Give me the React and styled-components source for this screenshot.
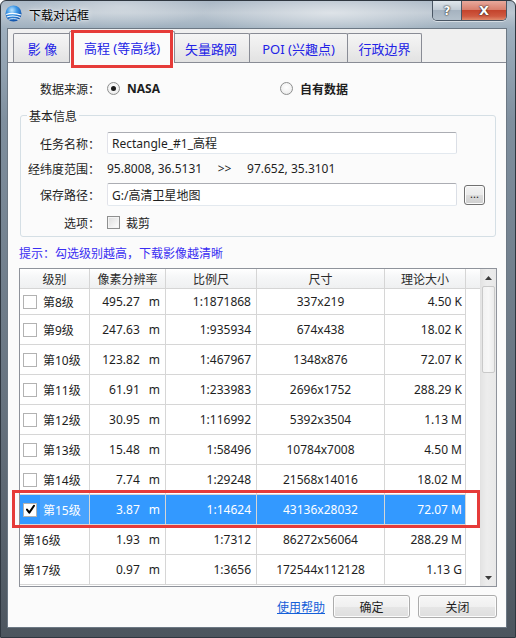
import React from 'react';
import styled, { createGlobalStyle } from 'styled-components';

const Global = createGlobalStyle`
  html, body { margin: 0; padding: 0; background: #ffffff; }
  body {
    font-family: "Noto Sans", "Noto Sans CJK SC", sans-serif;
    font-size: 12px;
    color: #1e1e1e;
  }
  * { box-sizing: border-box; }
`;

const Window = styled.div`
  position: relative;
  width: 516px;
  height: 638px;
  display: flex;
  flex-direction: column;
  border: 1px solid #2f3740;
  border-radius: 6px 6px 0 0;
  padding: 0 8px 9px 6px;
  background:
    radial-gradient(ellipse 130px 26px at 330px 12px, rgba(255, 255, 255, 0.5), rgba(255, 255, 255, 0)),
    radial-gradient(ellipse 90px 22px at 120px 6px, rgba(255, 255, 255, 0.35), rgba(255, 255, 255, 0)),
    linear-gradient(180deg, #aab8c6 0px, #bcc7d1 12px, #9fb0bf 27px, #7f8f9e 120px, #67737f 400px, #4c555e 638px);
`;

const TitleBar = styled.div`
  height: 27px;
  display: flex;
  align-items: flex-start;
  flex-shrink: 0;
`;

const AppIcon = styled.svg`
  width: 17px;
  height: 17px;
  margin: 4px 0 0 -2px;
  flex-shrink: 0;
`;

const TitleText = styled.div`
  margin-left: 7px;
  line-height: 27px;
  font-family: "Noto Sans CJK SC", sans-serif;
  font-size: 12px;
  color: #000;
  text-shadow: 0 0 6px rgba(255, 255, 255, 0.9), 0 0 2px rgba(255, 255, 255, 0.8);
`;

const CaptionButtons = styled.div`
  margin-left: auto;
  display: flex;
  border: 1px solid #4a5664;
  border-top: none;
  border-radius: 0 0 5px 5px;
  overflow: hidden;
  box-shadow: 0 1px 0 rgba(255, 255, 255, 0.5);
`;

const CaptionButton = styled.div`
  width: ${(p) => p.$w}px;
  height: 19px;
  display: flex;
  align-items: center;
  justify-content: center;
  color: #fff;
  font-family: "DejaVu Sans", sans-serif;
  font-weight: bold;
  font-size: ${(p) => (p.$close ? 13 : 12)}px;
  text-shadow: 0 0 2px #222, 0 0 1px #222;
  background: ${(p) =>
    p.$close
      ? 'linear-gradient(180deg, #e8a99c 0%, #d9806e 45%, #c4442d 50%, #cf5a41 80%, #e08a6c 100%)'
      : 'linear-gradient(180deg, #dfe6ec 0%, #c2ccd6 45%, #a6b3c0 50%, #b4c0cb 100%)'};
  border-left: ${(p) => (p.$close ? '1px solid #4a5664' : 'none')};
`;

const Client = styled.div`
  flex: 1;
  display: flex;
  flex-direction: column;
  background: #f0f0f0;
  border: 1px solid #6c7884;
`;

const TabStrip = styled.div`
  height: 33px;
  display: flex;
  align-items: flex-end;
  padding-left: 5px;
  flex-shrink: 0;
`;

const Tab = styled.div`
  width: ${(p) => (p.$active ? p.$w + 4 : p.$w)}px;
  height: ${(p) => (p.$active ? 32 : 29)}px;
  margin: ${(p) => (p.$active ? '0 -2px -1px -2px' : '0')};
  margin-left: ${(p) => (p.$first ? 0 : p.$active ? -3 : -1)}px;
  display: flex;
  align-items: center;
  justify-content: center;
  border: 1px solid #898c95;
  border-bottom: none;
  border-radius: 2px 2px 0 0;
  background: ${(p) => (p.$active ? '#fbfbfb' : 'linear-gradient(180deg, #f5f5f5 0%, #ececec 50%, #e2e2e2 100%)')};
  position: relative;
  z-index: ${(p) => (p.$active ? 1 : 0)};
  color: #2222e6;
  font-size: 13px;
  white-space: pre;
  padding-top: ${(p) => (p.$active ? 0 : 1)}px;
`;

const Panel = styled.div`
  flex: 1;
  display: flex;
  flex-direction: column;
  background: #fbfbfb;
  border-top: 1px solid #898c95;
  padding: 0 10px 0 11px;
`;

const SourceRow = styled.div`
  margin-top: 12px;
  height: 26px;
  display: flex;
  align-items: center;
`;

const Label = styled.div`
  width: ${(p) => p.$w}px;
  text-align: right;
  flex-shrink: 0;
  margin-right: 7px;
  font-family: "Noto Sans CJK SC", sans-serif;
  color: #1e1e1e;
`;

const RadioOption = styled.div`
  width: ${(p) => p.$w}px;
  display: flex;
  align-items: center;
  gap: 7px;
  font-weight: bold;
`;

const Radio = styled.span`
  width: 13px;
  height: 13px;
  border-radius: 50%;
  border: 1px solid #8e8f8f;
  background: radial-gradient(circle at 50% 40%, #ffffff 0%, #f1f1f1 60%, #dcdcdc 100%);
  display: inline-flex;
  align-items: center;
  justify-content: center;
  &::after {
    content: '';
    width: 5px;
    height: 5px;
    border-radius: 50%;
    background: #1c1c1c;
    display: ${(p) => (p.$checked ? 'block' : 'none')};
  }
`;

const Group = styled.fieldset`
  margin: 6px 0 0 1px;
  padding: 8px 0 0 0;
  border: 1px solid #d5dfe5;
  border-radius: 3px;
  min-width: 0;
`;

const Legend = styled.legend`
  margin-left: 6px;
  padding: 0 2px;
  line-height: 17px;
  font-family: "Noto Sans CJK SC", sans-serif;
  color: #1e1e1e;
`;

const FieldRow = styled.div`
  height: ${(p) => p.$h}px;
  margin-top: ${(p) => p.$mt || 0}px;
  display: flex;
  align-items: center;
`;

const TextBox = styled.input`
  width: 350px;
  height: ${(p) => p.$h}px;
  border: 1px solid;
  border-color: #abadb3 #dbdfe6 #e3e9ef #e2e3ea;
  border-radius: 2px;
  background: #fff;
  padding: 0 4px;
  font-family: "Noto Sans", "Noto Sans CJK SC", sans-serif;
  font-size: 12px;
  color: #1e1e1e;
  outline: none;
`;

const Coord = styled.span`
  white-space: pre;
`;

const SmallButton = styled.div`
  width: 21px;
  height: 20px;
  margin-left: 7px;
  border: 1px solid #707070;
  border-radius: 3px;
  background: linear-gradient(180deg, #f2f2f2 0%, #ebebeb 50%, #dddddd 51%, #cfcfcf 100%);
  box-shadow: inset 0 0 0 1px #fbfbfb;
  display: flex;
  align-items: center;
  justify-content: center;
  font-size: 11px;
  line-height: 1;
  padding-bottom: 2px;
`;

const CheckOption = styled.div`
  display: flex;
  align-items: center;
  gap: 6px;
  font-family: "Noto Sans CJK SC", sans-serif;
`;

const CheckBox = styled.span`
  width: ${(p) => p.$size || 13}px;
  height: ${(p) => p.$size || 13}px;
  flex-shrink: 0;
  border: 1px solid ${(p) => p.$border || '#8e8f8f'};
  background: ${(p) => p.$bg || 'linear-gradient(135deg, #dcdcdc 0%, #f4f4f4 70%, #ffffff 100%)'};
  box-shadow: ${(p) => (p.$inset ? 'inset 0 0 0 1px #f4f4f4' : 'none')};
  display: inline-flex;
  align-items: center;
  justify-content: center;
`;

const Hint = styled.div`
  margin-top: 8px;
  line-height: 16px;
  color: #3a2ef2;
  font-family: "Noto Sans CJK SC", sans-serif;
`;

const ListView = styled.div`
  margin-top: 7px;
  width: 478px;
  height: 319px;
  border: 1px solid #8f939b;
  display: flex;
  background: #fff;
  flex-shrink: 0;
`;

const ListArea = styled.div`
  flex: 1;
  display: flex;
  flex-direction: column;
  overflow: hidden;
`;

const COLS = '70px 76px 91px 128px 81px';

const HeaderRow = styled.div`
  height: 20px;
  display: grid;
  grid-template-columns: ${COLS} 1fr;
  background: linear-gradient(180deg, #ffffff 0%, #f6f7f8 40%, #eff0f1 100%);
  border-bottom: 1px solid #d5d5d5;
  flex-shrink: 0;
`;

const HeadCell = styled.div`
  display: flex;
  align-items: center;
  justify-content: center;
  border-right: ${(p) => (p.$last ? 'none' : '1px solid #d5d5d5')};
  font-family: "Noto Sans CJK SC", sans-serif;
  color: #2a2a2a;
`;

const Row = styled.div`
  width: 446px;
  height: ${(p) => p.$h}px;
  display: grid;
  grid-template-columns: ${COLS};
  border-bottom: 1px solid #d6d6d6;
  flex-shrink: 0;
  color: ${(p) => (p.$sel ? '#ffffff' : '#1e1e1e')};
`;

const Cell = styled.div`
  display: flex;
  align-items: center;
  justify-content: ${(p) => p.$align || 'flex-end'};
  border-right: 1px solid #d6d6d6;
  padding: 0 ${(p) => p.$pr ?? 5}px 0 ${(p) => p.$pl ?? 0}px;
  background: ${(p) => (p.$sel ? p.$selBg || '#3399ff' : 'transparent')};
  white-space: pre;
`;

const LevelText = styled.span`
  margin-left: ${(p) => (p.$check ? 6 : 0)}px;
  font-family: "Noto Sans", "Noto Sans CJK SC", sans-serif;
`;

const Unit = styled.span`
  margin-left: 9px;
`;

const ScrollBar = styled.div`
  width: 16px;
  display: flex;
  flex-direction: column;
  background: linear-gradient(90deg, #e4e4e4 0%, #ededed 40%, #e8e8e8 100%);
  border-left: 1px solid #e2e2e2;
  flex-shrink: 0;
`;

const ScrollArrow = styled.div`
  height: 17px;
  display: flex;
  align-items: center;
  justify-content: center;
  flex-shrink: 0;
`;

const ScrollTrack = styled.div`
  flex: 1;
  display: flex;
  flex-direction: column;
`;

const ScrollThumb = styled.div`
  height: 87px;
  margin: 0 1px;
  border: 1px solid #c9c9c9;
  border-radius: 2px;
  background: linear-gradient(90deg, #f2f2f2 0%, #f7f7f7 50%, #ececec 100%);
`;

const Footer = styled.div`
  margin-top: 8px;
  height: 23px;
  display: flex;
  align-items: center;
  justify-content: flex-end;
  gap: 8px;
  width: 478px;
`;

const HelpLink = styled.a`
  color: #1560d8;
  text-decoration: underline;
  font-family: "Noto Sans CJK SC", sans-serif;
  margin-right: 0;
`;

const PushButton = styled.div`
  width: ${(p) => p.$w}px;
  height: 23px;
  border: 1px solid #acacac;
  border-radius: 3px;
  background: linear-gradient(180deg, #f7f7f7 0%, #f0f0f0 50%, #e6e6e6 51%, #dedede 100%);
  box-shadow: inset 0 0 0 1px #fcfcfc;
  display: flex;
  align-items: center;
  justify-content: center;
  font-family: "Noto Sans CJK SC", sans-serif;
  color: #1e1e1e;
`;

const Annotation = styled.div`
  position: absolute;
  left: ${(p) => p.$x}px;
  top: ${(p) => p.$y}px;
  width: ${(p) => p.$w}px;
  height: ${(p) => p.$h}px;
  border: 3px solid #e63b39;
  pointer-events: none;
  z-index: 5;
`;

const tabs = [
  { label: '影 像', w: 59 },
  { label: '高程 (等高线)', w: 102, active: true },
  { label: '矢量路网', w: 78 },
  { label: 'POI (兴趣点)', w: 99 },
  { label: '行政边界', w: 75 },
];

const rows = [
  ['第8级', '495.27', '1:1871868', '337x219', '4.50 K', 'box'],
  ['第9级', '247.63', '1:935934', '674x438', '18.02 K', 'box'],
  ['第10级', '123.82', '1:467967', '1348x876', '72.07 K', 'box'],
  ['第11级', '61.91', '1:233983', '2696x1752', '288.29 K', 'box'],
  ['第12级', '30.95', '1:116992', '5392x3504', '1.13 M', 'box'],
  ['第13级', '15.48', '1:58496', '10784x7008', '4.50 M', 'box'],
  ['第14级', '7.74', '1:29248', '21568x14016', '18.02 M', 'box'],
  ['第15级', '3.87', '1:14624', '43136x28032', '72.07 M', 'checked'],
  ['第16级', '1.93', '1:7312', '86272x56064', '288.29 M', 'none'],
  ['第17级', '0.97', '1:3656', '172544x112128', '1.13 G', 'none'],
];

const GlobeIcon = () => (
  <AppIcon viewBox="0 0 17 17">
    <defs>
      <radialGradient id="gl" cx="40%" cy="30%" r="70%">
        <stop offset="0%" stopColor="#bfe6ff" />
        <stop offset="45%" stopColor="#3d97e6" />
        <stop offset="100%" stopColor="#0d4fa8" />
      </radialGradient>
    </defs>
    <circle cx="8.5" cy="8.5" r="8" fill="url(#gl)" />
    <path d="M1.2 9.5 C5 8 11 8.2 16 10" stroke="#fff" strokeWidth="1.3" fill="none" />
    <path d="M1.8 12 C5.5 10.6 11 10.8 15.4 12.4" stroke="#fff" strokeWidth="1.1" fill="none" />
    <path d="M3.5 14.4 C6.5 13.3 10.5 13.4 13.8 14.6" stroke="#eaf6ff" strokeWidth="0.9" fill="none" />
  </AppIcon>
);

const CheckMark = () => (
  <svg width="11" height="11" viewBox="0 0 11 11">
    <path d="M2 5.6 L4.3 8.6 L9 1.8" stroke="#000" strokeWidth="2" fill="none" strokeLinecap="round" strokeLinejoin="round" />
  </svg>
);

const Arrow = ({ down }) => (
  <svg width="7" height="4" viewBox="0 0 7 4">
    <polygon points={down ? '0,0 7,0 3.5,4' : '0,4 7,4 3.5,0'} fill="#3c3c3c" />
  </svg>
);

export default function App() {
  return (
    <>
      <Global />
      <Window>
        <TitleBar>
          <GlobeIcon />
          <TitleText>下载对话框</TitleText>
          <CaptionButtons>
            <CaptionButton $w={28}>?</CaptionButton>
            <CaptionButton $w={45} $close>X</CaptionButton>
          </CaptionButtons>
        </TitleBar>
        <Client>
          <TabStrip>
            {tabs.map((t, i) => (
              <Tab key={t.label} $w={t.w} $active={t.active} $first={i === 0}>
                {t.label}
              </Tab>
            ))}
          </TabStrip>
          <Panel>
            <SourceRow>
              <Label $w={81}>数据来源：</Label>
              <RadioOption $w={173}>
                <Radio $checked />
                NASA
              </RadioOption>
              <RadioOption $w={120}>
                <Radio />
                <span style={{ fontFamily: '"Noto Sans CJK SC", sans-serif' }}>自有数据</span>
              </RadioOption>
            </SourceRow>

            <Group>
              <Legend>基本信息</Legend>
              <FieldRow $h={22}>
                <Label $w={79}>任务名称：</Label>
                <TextBox $h={22} readOnly value="Rectangle_#1_高程" />
              </FieldRow>
              <FieldRow $h={29}>
                <Label $w={79}>经纬度范围：</Label>
                <Coord>{'95.8008, 36.5131     >>     97.652, 35.3101'}</Coord>
              </FieldRow>
              <FieldRow $h={23}>
                <Label $w={79}>保存路径：</Label>
                <TextBox $h={23} readOnly value="G:/高清卫星地图" />
                <SmallButton>...</SmallButton>
              </FieldRow>
              <FieldRow $h={28} $mt={2}>
                <Label $w={79}>选项：</Label>
                <CheckOption>
                  <CheckBox $inset />
                  裁剪
                </CheckOption>
              </FieldRow>
            </Group>

            <Hint>提示：勾选级别越高，下载影像越清晰</Hint>

            <ListView>
              <ListArea>
                <HeaderRow>
                  <HeadCell>级别</HeadCell>
                  <HeadCell>像素分辨率</HeadCell>
                  <HeadCell>比例尺</HeadCell>
                  <HeadCell>尺寸</HeadCell>
                  <HeadCell>理论大小</HeadCell>
                  <HeadCell $last />
                </HeaderRow>
                {rows.map((r, i) => {
                  const sel = r[5] === 'checked';
                  return (
                    <Row key={r[0]} $h={i === 0 ? 26 : 30} $sel={sel}>
                      <Cell
                        $align="flex-start"
                        $pl={3}
                        $pr={0}
                        $sel={sel}
                        $selBg="linear-gradient(90deg, #3399ff 20px, #47a3ff 20px)"
                      >
                        {r[5] !== 'none' && (
                          <CheckBox $size={14} $border="#b2b2b2" $bg="#ffffff">
                            {sel && <CheckMark />}
                          </CheckBox>
                        )}
                        <LevelText $check={r[5] !== 'none'}>{r[0]}</LevelText>
                      </Cell>
                      <Cell $pr={5} $sel={sel}>
                        <span>{r[1]}</span>
                        <Unit>m</Unit>
                      </Cell>
                      <Cell $pr={5} $sel={sel}>{r[2]}</Cell>
                      <Cell $align="center" $pr={0} $sel={sel}>{r[3]}</Cell>
                      <Cell $pr={3} $sel={sel}>{r[4]}</Cell>
                    </Row>
                  );
                })}
              </ListArea>
              <ScrollBar>
                <ScrollArrow>
                  <Arrow />
                </ScrollArrow>
                <ScrollTrack>
                  <ScrollThumb />
                </ScrollTrack>
                <ScrollArrow>
                  <Arrow down />
                </ScrollArrow>
              </ScrollBar>
            </ListView>

            <Footer>
              <HelpLink href="#help">使用帮助</HelpLink>
              <PushButton $w={77}>确定</PushButton>
              <PushButton $w={79}>关闭</PushButton>
            </Footer>
          </Panel>
        </Client>
        <Annotation $x={70} $y={29} $w={102} $h={38} />
        <Annotation $x={11} $y={489} $w={468} $h={38} />
      </Window>
    </>
  );
}
